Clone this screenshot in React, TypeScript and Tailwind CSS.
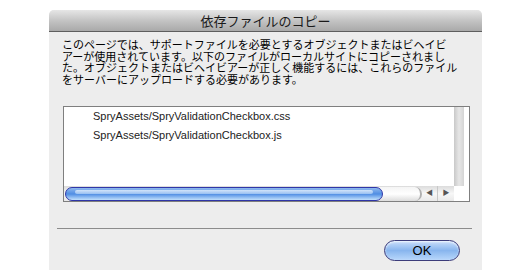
export default function App() {
  const files = [
    "SpryAssets/SpryValidationCheckbox.css",
    "SpryAssets/SpryValidationCheckbox.js",
  ]

  return (
    <div className="w-[530px] h-[280px] bg-white pt-[10px] pl-[49px] font-['Liberation_Sans','Noto_Sans_CJK_JP',sans-serif]">
      <div className="w-[433px] h-[260px] bg-[#ededed] rounded-t-[5px] flex flex-col">
        {/* title bar */}
        <div className="h-[22px] rounded-t-[5px] bg-gradient-to-b from-[#e6e6e6] via-[#c4c4c4] to-[#a9a9a9] border-b border-[#5e5e5e] flex items-center justify-center">
          <span className="text-[13px] text-[#1a1a1a] font-['Noto_Sans_CJK_JP',sans-serif] leading-none">依存ファイルのコピー</span>
        </div>

        {/* message */}
        <div className="pt-[7px] pl-[13px] text-[11px] leading-[11.5px] text-black font-['Noto_Sans_CJK_JP',sans-serif] whitespace-nowrap">
          このページでは、サポートファイルを必要とするオブジェクトまたはビヘイビ
          <br />
          アーが使用されています。以下のファイルがローカルサイトにコピーされまし
          <br />
          た。オブジェクトまたはビヘイビアーが正しく機能するには、これらのファイル
          <br />
          をサーバーにアップロードする必要があります。
        </div>

        {/* file list */}
        <div className="mt-[21px] ml-[14px] w-[407px] h-[96px] border border-[#7f7f7f] bg-white flex flex-col">
          <div className="flex flex-1">
            <div className="flex-1">
              {files.map((f) => (
                <div key={f} className="h-[19px] pl-[29px] flex items-center text-[11px] text-[#222]">
                  {f}
                </div>
              ))}
            </div>
            <div className="w-[15px] flex">
              <div className="w-[10px] bg-gradient-to-r from-[#c9c9c9] via-[#e6e6e6] to-[#d4d4d4]" />
            </div>
          </div>
          <div className="h-[15px] flex">
            <div className="flex-1 flex items-center bg-gradient-to-b from-[#dcdcdc] via-[#f7f7f7] to-[#e9e9e9]">
              <div className="h-[15px] flex-1 flex items-center">
                <div className="relative z-10 w-[318px] h-[14px] ml-[1px] rounded-full border border-[#2f36a8] bg-gradient-to-b from-[#8fb8ee] via-[#4f8de3] to-[#c2e0fb] flex items-start justify-center">
                  <div className="mt-[2px] w-[298px] h-[4px] rounded-full bg-gradient-to-b from-[#e8f2fd] to-[#a9ccf5] opacity-80" />
                </div>
                <div className="flex-1 h-[14px] -ml-[8px] rounded-r-full bg-gradient-to-b from-[#f4f4f4] via-[#ffffff] to-[#dcdcdc] border-r-2 border-[#b0b0b0]" />
              </div>
              <div className="w-[16px] h-[15px] flex items-center justify-center border-r border-[#c8c8c8] text-[7px] text-[#555]">◀</div>
              <div className="w-[16px] h-[15px] flex items-center justify-center text-[7px] text-[#555]">▶</div>
            </div>
            <div className="w-[15px] bg-white" />
          </div>
        </div>

        {/* separator */}
        <div className="mt-[26px] ml-[8px] mr-[10px] h-px bg-[#8c8c8c]" />

        {/* button */}
        <div className="flex justify-end mt-[11px] pr-[22px]">
          <button className="w-[76px] h-[21px] rounded-full border border-[#3c3c7a] bg-gradient-to-b from-[#c9defa] via-[#88b5ee] to-[#b8d7fb] shadow-[inset_0_1px_2px_rgba(255,255,255,0.8)] text-[13px] text-black leading-none flex items-center justify-center">
            OK
          </button>
        </div>
      </div>
    </div>
  )
}
